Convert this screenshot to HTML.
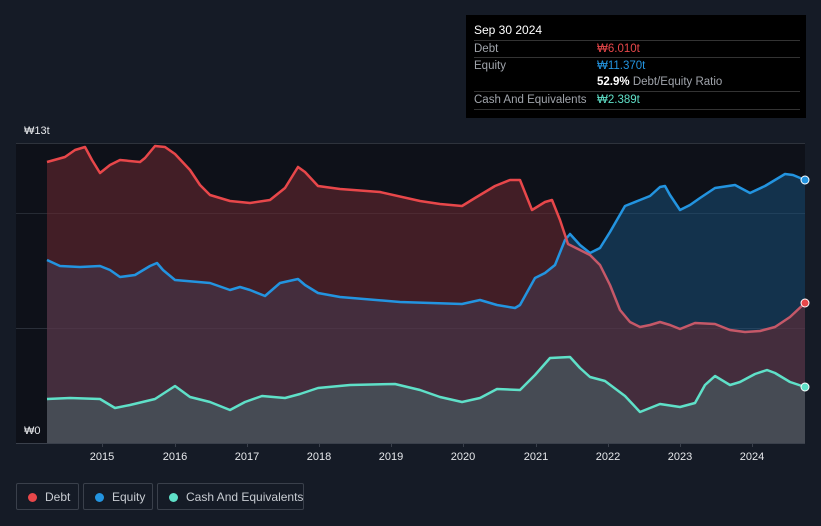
<!DOCTYPE html>
<html><head><meta charset="utf-8"><style>
body{margin:0;background:#151b26;width:821px;height:526px;overflow:hidden;font-family:"Liberation Sans",sans-serif;position:relative}
.tt{position:absolute;left:466px;top:15px;width:340px;height:103px;background:#000;color:#fff;font-size:11.5px}
.tt .r{position:absolute;left:8px;right:6px;border-top:1px solid #333;height:17px;line-height:17px;color:#a0a4ab;white-space:nowrap}
.tt .v{position:absolute;left:123px}
.leg{position:absolute;top:483px;height:27px;border:1px solid #3a404b;border-radius:2px;color:#c8ccd2;font-size:12px;line-height:27px;box-sizing:border-box;white-space:nowrap}
.leg i{position:absolute;left:11px;top:9px;width:9px;height:9px;border-radius:50%}
.yl{position:absolute;left:24px;color:#e6e8eb;font-size:11px}
.xl{position:absolute;top:451px;color:#e6e8eb;font-size:11px;width:40px;margin-left:-20px;text-align:center}
</style></head><body>
<svg width="821" height="526" style="position:absolute;left:0;top:0">
<defs>
<linearGradient id="dl" gradientUnits="userSpaceOnUse" x1="0" x2="821" y1="0" y2="0">
<stop offset="0.685" stop-color="#e8474a"/><stop offset="0.695" stop-color="#c55868"/></linearGradient>
</defs>
<rect x="16" y="143" width="789" height="300" fill="#0e1119"/>
<line x1="16" x2="805" y1="143.5" y2="143.5" stroke="#2e333c"/>
<line x1="16" x2="805" y1="213.5" y2="213.5" stroke="#262b34"/>
<line x1="16" x2="805" y1="328.5" y2="328.5" stroke="#2a2f39"/>
<path d="M47,260 L60,266 L80,267 L100,266 L110,270 L120,277 L135,275 L150,266 L157,263 L163,270 L175,280 L210,283 L230,290 L240,287 L250,290 L265,296 L280,283 L298,279 L305,285 L318,293 L340,297 L400,302 L462,304 L480,300 L497,305 L515,308 L520,305 L535,278 L545,273 L555,265 L565,240 L570,234 L580,245 L590,253 L600,248 L610,232 L625,206 L640,200 L650,196 L660,187 L665,186 L670,195 L680,210 L690,205 L700,198 L715,188 L735,185 L750,193 L765,186 L785,174 L793,175 L805,180 L805,443 L47,443Z" fill="#1a5a8c" fill-opacity="0.45"/>
<path d="M47,162 L65,157 L75,150 L85,147 L92,160 L100,173 L110,165 L120,160 L140,162 L145,158 L155,146 L165,147 L175,154 L190,170 L200,185 L210,195 L230,201 L250,203 L270,200 L285,188 L298,167 L305,172 L318,186 L340,189 L380,192 L420,201 L440,204 L462,206 L475,198 L495,186 L510,180 L520,180 L532,210 L545,202 L552,200 L560,220 L568,244 L580,250 L590,255 L600,265 L610,285 L620,310 L630,322 L640,327 L650,325 L660,322 L670,325 L680,329 L695,323 L715,324 L730,330 L745,332 L760,331 L775,327 L790,317 L805,303 L805,443 L47,443Z" fill="#6e2a32" fill-opacity="0.55"/>
<path d="M47,399 L70,398 L100,399 L115,408 L130,405 L155,399 L175,386 L190,397 L210,402 L230,410 L245,402 L262,396 L285,398 L300,394 L318,388 L350,385 L395,384 L420,390 L440,397 L462,402 L480,398 L497,389 L520,390 L535,375 L550,358 L570,357 L580,368 L590,377 L605,381 L625,396 L640,412 L650,408 L660,404 L680,407 L695,403 L705,385 L715,376 L730,385 L740,382 L755,374 L767,370 L775,373 L790,382 L805,387 L805,443 L47,443Z" fill="#4fb8a8" fill-opacity="0.22"/>
<path d="M47,260 L60,266 L80,267 L100,266 L110,270 L120,277 L135,275 L150,266 L157,263 L163,270 L175,280 L210,283 L230,290 L240,287 L250,290 L265,296 L280,283 L298,279 L305,285 L318,293 L340,297 L400,302 L462,304 L480,300 L497,305 L515,308 L520,305 L535,278 L545,273 L555,265 L565,240 L570,234 L580,245 L590,253 L600,248 L610,232 L625,206 L640,200 L650,196 L660,187 L665,186 L670,195 L680,210 L690,205 L700,198 L715,188 L735,185 L750,193 L765,186 L785,174 L793,175 L805,180" fill="none" stroke="#2394e0" stroke-width="2.5" stroke-linejoin="round"/>
<path d="M47,162 L65,157 L75,150 L85,147 L92,160 L100,173 L110,165 L120,160 L140,162 L145,158 L155,146 L165,147 L175,154 L190,170 L200,185 L210,195 L230,201 L250,203 L270,200 L285,188 L298,167 L305,172 L318,186 L340,189 L380,192 L420,201 L440,204 L462,206 L475,198 L495,186 L510,180 L520,180 L532,210 L545,202 L552,200 L560,220 L568,244 L580,250 L590,255 L600,265 L610,285 L620,310 L630,322 L640,327 L650,325 L660,322 L670,325 L680,329 L695,323 L715,324 L730,330 L745,332 L760,331 L775,327 L790,317 L805,303" fill="none" stroke="url(#dl)" stroke-width="2.5" stroke-linejoin="round"/>
<path d="M47,399 L70,398 L100,399 L115,408 L130,405 L155,399 L175,386 L190,397 L210,402 L230,410 L245,402 L262,396 L285,398 L300,394 L318,388 L350,385 L395,384 L420,390 L440,397 L462,402 L480,398 L497,389 L520,390 L535,375 L550,358 L570,357 L580,368 L590,377 L605,381 L625,396 L640,412 L650,408 L660,404 L680,407 L695,403 L705,385 L715,376 L730,385 L740,382 L755,374 L767,370 L775,373 L790,382 L805,387" fill="none" stroke="#5fe0c8" stroke-width="2.5" stroke-linejoin="round"/>
<rect x="805" y="143" width="16" height="300" fill="#151b26"/>
<circle cx="805" cy="180" r="4" fill="#2394e0" stroke="#fff" stroke-width="1"/>
<circle cx="805" cy="303" r="4" fill="#e8474a" stroke="#fff" stroke-width="1"/>
<circle cx="805" cy="387" r="4" fill="#5fe0c8" stroke="#fff" stroke-width="1"/>
<line x1="16" x2="805" y1="443.5" y2="443.5" stroke="#3a404b"/>
<g stroke="#3a404b"><line x1="102.5" x2="102.5" y1="443" y2="447"/><line x1="175.5" x2="175.5" y1="443" y2="447"/><line x1="247.5" x2="247.5" y1="443" y2="447"/><line x1="319.5" x2="319.5" y1="443" y2="447"/><line x1="391.5" x2="391.5" y1="443" y2="447"/><line x1="463.5" x2="463.5" y1="443" y2="447"/><line x1="536.5" x2="536.5" y1="443" y2="447"/><line x1="608.5" x2="608.5" y1="443" y2="447"/><line x1="680.5" x2="680.5" y1="443" y2="447"/><line x1="752.5" x2="752.5" y1="443" y2="447"/></g>
</svg>
<div class="yl" style="top:125px">₩13t</div>
<div class="yl" style="top:425px">₩0</div>
<div class="xl" style="left:102px">2015</div><div class="xl" style="left:175px">2016</div><div class="xl" style="left:247px">2017</div><div class="xl" style="left:319px">2018</div><div class="xl" style="left:391px">2019</div><div class="xl" style="left:463px">2020</div><div class="xl" style="left:536px">2021</div><div class="xl" style="left:608px">2022</div><div class="xl" style="left:680px">2023</div><div class="xl" style="left:752px">2024</div>
<div class="tt">
<div style="position:absolute;left:8px;top:8px;font-size:12px">Sep 30 2024</div>
<div class="r" style="top:25px">Debt<span class="v" style="color:#e8474a">₩6.010t</span></div>
<div class="r" style="top:42px">Equity<span class="v" style="color:#2394e0">₩11.370t</span></div>
<div class="r" style="top:59px;border-top:none"><span class="v" style="color:#fff"><b>52.9%</b> <span style="color:#a0a4ab">Debt/Equity Ratio</span></span></div>
<div class="r" style="top:76px">Cash And Equivalents<span class="v" style="color:#5fe0c8">₩2.389t</span></div>
<div style="position:absolute;left:8px;right:6px;top:94px;border-top:1px solid #333"></div>
</div>
<div class="leg" style="left:16px;width:63px"><i style="background:#e8474a"></i><span style="position:absolute;left:28px">Debt</span></div>
<div class="leg" style="left:83px;width:70px"><i style="background:#2394e0"></i><span style="position:absolute;left:28px">Equity</span></div>
<div class="leg" style="left:157px;width:147px"><i style="background:#5fe0c8"></i><span style="position:absolute;left:28px">Cash And Equivalents</span></div>
</body></html>
